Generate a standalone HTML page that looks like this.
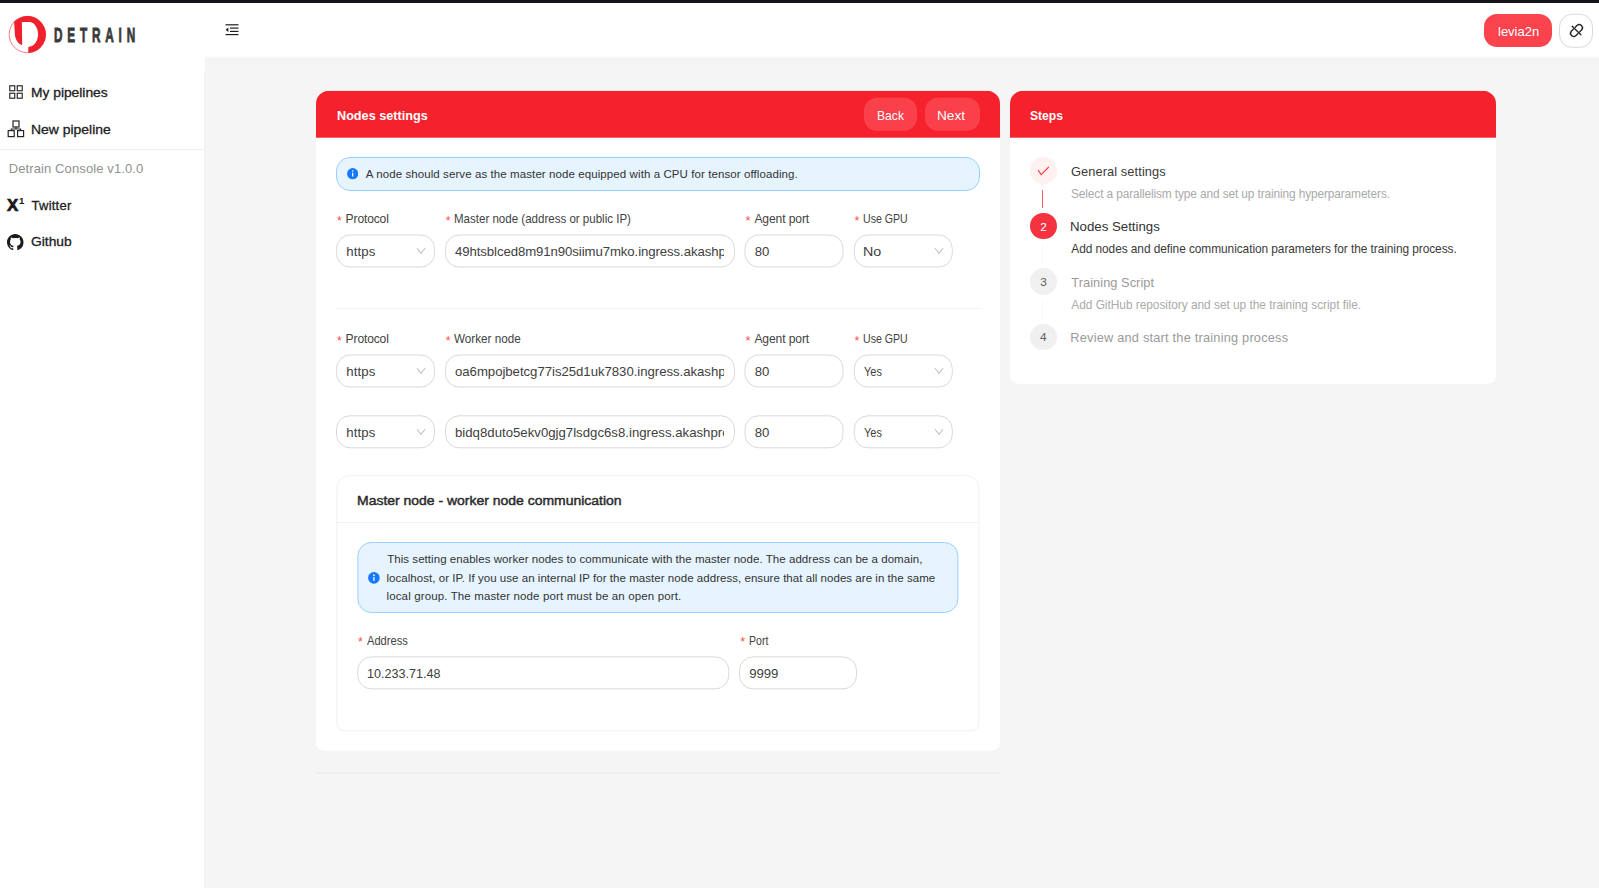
<!DOCTYPE html>
<html lang="en">
<head>
<meta charset="utf-8">
<title>Detrain Console</title>
<style>
*{box-sizing:border-box;margin:0;padding:0}
html,body{width:1599px;height:888px;overflow:hidden;background:#fff}
body{font-family:"Liberation Sans",sans-serif;color:#262626;font-size:14px;position:relative}
.abs{position:absolute}
.t{position:absolute;white-space:nowrap;line-height:1;transform-origin:0 50%}
.clip{position:absolute;overflow:hidden}
#topbar{left:0;top:0;width:1599px;height:2.8px;background:#14151a}
#content{left:205px;top:56px;width:1394px;height:832px;background:#f5f5f5}
#hshadow{left:205px;top:55px;width:1394px;height:6px;background:linear-gradient(#fff 8%,#f1f1f1 75%,#f5f5f5 100%)}
#sborder{left:204px;top:72px;width:1px;height:816px;background:#f1f1f1}
#side-div{left:0;top:149px;width:205px;height:1px;background:#f0f0f0}
.card{position:absolute;background:#fff;border-radius:13px 13px 8px 8px;overflow:hidden}
.card-h{position:absolute;left:0;top:0;right:0;height:46.5px;background:#f5222d}
.btn{position:absolute;height:33.4px;border-radius:13px;background:#fa404b}
.alert{position:absolute;background:#e6f4ff;border:1px solid #9ccfff;border-radius:14px}
.inp{position:absolute;height:33px;border:1px solid #d9d9d9;border-radius:14px;background:#fff}
.hr{position:absolute;height:1px;background:#f0f0f0}
.step-c{position:absolute;width:26.6px;height:26.6px;border-radius:50%}
</style>
</head>
<body>
<div class="abs" id="content"></div>
<div class="abs" id="hshadow"></div>
<div class="abs" id="sborder"></div>
<div class="abs" id="topbar"></div>

<!-- LOGO -->
<svg class="abs" style="left:8px;top:15px" width="40" height="40" viewBox="8 15 40 40">
  <circle cx="27.4" cy="34.5" r="18.2" fill="#fff" stroke="#f5222d" stroke-width="0.6"/>
  <path d="M14.1 21.6 A18.5 18.5 0 1 1 28.2 53 L28.4 46.7 A9 12.4 0 0 0 30 22 L21.9 22 L22.2 45.2 Q16.6 43.4 15 36 Z" fill="#f0212c"/>
</svg>
<div class="t" id="brand" style="left:53.5px;top:24.4px;font-size:21px;font-weight:700;color:#3a3a3a;letter-spacing:8.6px;transform:scaleX(0.56);-webkit-text-stroke:0.9px #3a3a3a">DETRAIN</div>


<!-- SIDEBAR -->
<svg class="abs" style="left:8.7px;top:84.8px" width="14" height="14" viewBox="0 0 14.6 14.6" fill="none" stroke="#262626" stroke-width="1.2">
  <rect x="0.8" y="0.8" width="5.2" height="5.2"/><rect x="8.6" y="0.8" width="5.2" height="5.2"/>
  <rect x="0.8" y="8.6" width="5.2" height="5.2"/><rect x="8.6" y="8.6" width="5.2" height="5.2"/>
</svg>
<svg class="abs" style="left:6.8px;top:120px" width="18" height="18" viewBox="0 0 18 18" fill="none" stroke="#262626" stroke-width="1.2">
  <rect x="6" y="1" width="6" height="6"/><rect x="1.2" y="10.6" width="6" height="6"/><rect x="10.6" y="10.6" width="6" height="6"/>
  <path d="M9 7v2M4.2 10.6V9h9.4v1.6"/>
</svg>
<div class="abs" id="side-div"></div>
<div class="t" style="left:7px;top:197.6px;font-size:16px;font-weight:700;color:#1a1a1a;-webkit-text-stroke:0.7px #1a1a1a;transform:scaleX(1.05)">X</div>
<div class="t" style="left:18.9px;top:195.6px;font-size:9.5px;font-weight:700;color:#1a1a1a">1</div>
<svg class="abs" style="left:7.2px;top:233.7px" width="16.5" height="16.5" viewBox="0 0 16 16" fill="#1a1a1a">
  <path d="M8 0C3.58 0 0 3.58 0 8c0 3.54 2.29 6.53 5.47 7.59.4.07.55-.17.55-.38 0-.19-.01-.82-.01-1.49-2.01.37-2.53-.49-2.69-.94-.09-.23-.48-.94-.82-1.13-.28-.15-.68-.52-.01-.53.63-.01 1.08.58 1.23.82.72 1.21 1.87.87 2.33.66.07-.52.28-.87.51-1.07-1.78-.2-3.64-.89-3.64-3.95 0-.87.31-1.59.82-2.15-.08-.2-.36-1.02.08-2.12 0 0 .67-.21 2.2.82.64-.18 1.32-.27 2-.27s1.36.09 2 .27c1.53-1.04 2.2-.82 2.2-.82.44 1.1.16 1.92.08 2.12.51.56.82 1.27.82 2.15 0 3.07-1.87 3.75-3.65 3.95.29.25.54.73.54 1.48 0 1.07-.01 1.93-.01 2.2 0 .21.15.46.55.38A8.01 8.01 0 0 0 16 8c0-4.42-3.58-8-8-8z"/>
</svg>


<!-- HEADER -->
<svg class="abs" style="left:225px;top:24px" width="14" height="12" viewBox="0 0 14 12" fill="#1f1f1f">
  <rect x="0.5" y="0.2" width="13" height="1.2"/><rect x="5" y="3.5" width="8.5" height="1.2"/><rect x="5" y="6.8" width="8.5" height="1.2"/><rect x="0.5" y="10" width="13" height="1.2"/>
  <path d="M3.4 3.4v4.6L0.6 5.7z"/>
</svg>
<div class="btn" style="left:1483.7px;top:14px;width:68.5px;height:33.3px;background:#fb434e"></div>
<div class="abs" style="left:1559px;top:14px;width:34px;height:33.6px;border:1px solid #d9d9d9;border-radius:13px;background:#fff;transform:translateY(-0.2px)"></div>
<svg class="abs" style="left:1568px;top:22.1px" width="17" height="17" viewBox="0 0 16 16" fill="none" stroke="#2a2a2a" stroke-width="1.35" stroke-linecap="round"><g transform="rotate(-45 8 8)"><path d="M6.6 5H4.4a3 3 0 0 0 0 6H6.6M9.4 5h2.2a3 3 0 0 1 0 6H9.4M8 2.2V13.8"/></g></svg>


<!-- CARDS -->
<div class="card" style="left:316px;top:90px;width:684px;height:660px;transform:translateY(0.7px)"><div class="card-h"></div></div>
<div class="card" style="left:1010px;top:90px;width:485.7px;height:293px;transform:translateY(0.7px)"><div class="card-h"></div></div>
<div class="btn" style="left:863.8px;top:97px;width:53.7px;transform:translateY(0.8px)"></div>
<div class="btn" style="left:924.5px;top:97px;width:55px;transform:translateY(0.8px)"></div>
<div class="alert" style="left:336px;top:157px;width:643.5px;height:33.5px"></div>
<svg class="abs" style="left:347.1px;top:168.2px" width="11.4" height="11.4" viewBox="0 0 12 12"><circle cx="6" cy="6" r="5.9" fill="#1677ff"/><rect x="5.35" y="5" width="1.3" height="4" fill="#fff"/><circle cx="6" cy="3.2" r="0.85" fill="#fff"/></svg>
<div class="hr" style="left:336px;top:308px;width:643.5px;background:#f3f3f3"></div>
<div class="abs" style="left:336px;top:475px;width:642.5px;height:255.5px;border:1px solid #f0f0f0;border-radius:13px 13px 8px 8px;background:#fff;transform:translate(0.4px,0.3px)"></div>
<div class="hr" style="left:337px;top:522px;width:641.5px;background:#f2f2f2"></div>
<div class="alert" style="left:357px;top:542px;width:600.8px;height:70.5px;transform:translateX(0.4px)"></div>
<svg class="abs" style="left:368.1px;top:572px" width="11.8" height="11.8" viewBox="0 0 12 12"><circle cx="6" cy="6" r="5.9" fill="#1677ff"/><rect x="5.35" y="5" width="1.3" height="4" fill="#fff"/><circle cx="6" cy="3.2" r="0.85" fill="#fff"/></svg>
<div class="hr" style="left:316px;top:772px;width:684px;background:#e9e9e9;transform:translateY(0.4px)"></div>
<div class="inp" style="left:336px;top:234px;width:98.5px;transform:translate(0.00px,0.50px)"></div>
<svg class="abs" style="left:416.1px;top:247.2px" width="10" height="8" viewBox="0 0 10 8" fill="none" stroke="#bfbfbf" stroke-width="1.05"><path d="M1 1.3L5 6.4L9 1.3"/></svg>
<div class="inp" style="left:445px;top:234px;width:289.5px;transform:translate(0.00px,0.50px)"></div>
<div class="inp" style="left:744px;top:234px;width:99px;transform:translate(0.50px,0.50px)"></div>
<div class="inp" style="left:853px;top:234px;width:98.5px;transform:translate(0.80px,0.50px)"></div>
<svg class="abs" style="left:933.9px;top:247.2px" width="10" height="8" viewBox="0 0 10 8" fill="none" stroke="#bfbfbf" stroke-width="1.05"><path d="M1 1.3L5 6.4L9 1.3"/></svg>
<div class="inp" style="left:336px;top:354px;width:98.5px;transform:translate(0.00px,0.50px)"></div>
<svg class="abs" style="left:416.1px;top:367.2px" width="10" height="8" viewBox="0 0 10 8" fill="none" stroke="#bfbfbf" stroke-width="1.05"><path d="M1 1.3L5 6.4L9 1.3"/></svg>
<div class="inp" style="left:445px;top:354px;width:289.5px;transform:translate(0.00px,0.50px)"></div>
<div class="inp" style="left:744px;top:354px;width:99px;transform:translate(0.50px,0.50px)"></div>
<div class="inp" style="left:853px;top:354px;width:98.5px;transform:translate(0.80px,0.50px)"></div>
<svg class="abs" style="left:933.9px;top:367.2px" width="10" height="8" viewBox="0 0 10 8" fill="none" stroke="#bfbfbf" stroke-width="1.05"><path d="M1 1.3L5 6.4L9 1.3"/></svg>
<div class="inp" style="left:336px;top:415px;width:98.5px;transform:translate(0.00px,0.30px)"></div>
<svg class="abs" style="left:416.1px;top:428.0px" width="10" height="8" viewBox="0 0 10 8" fill="none" stroke="#bfbfbf" stroke-width="1.05"><path d="M1 1.3L5 6.4L9 1.3"/></svg>
<div class="inp" style="left:445px;top:415px;width:289.5px;transform:translate(0.00px,0.30px)"></div>
<div class="inp" style="left:744px;top:415px;width:99px;transform:translate(0.50px,0.30px)"></div>
<div class="inp" style="left:853px;top:415px;width:98.5px;transform:translate(0.80px,0.30px)"></div>
<svg class="abs" style="left:933.9px;top:428.0px" width="10" height="8" viewBox="0 0 10 8" fill="none" stroke="#bfbfbf" stroke-width="1.05"><path d="M1 1.3L5 6.4L9 1.3"/></svg>
<div class="inp" style="left:357px;top:656px;width:372.2px;transform:translate(0.30px,0.40px)"></div>
<div class="inp" style="left:739px;top:656px;width:117.5px;transform:translate(0.00px,0.40px)"></div>

<!-- STEPS -->
<div class="abs" style="left:1042.4px;top:189.5px;width:1px;height:18px;background:#f4566a"></div>
<div class="abs" style="left:1042.4px;top:245px;width:1px;height:18px;background:#f6f6f6"></div>
<div class="abs" style="left:1042.4px;top:300.5px;width:1px;height:18px;background:#f6f6f6"></div>
<div class="step-c" style="left:1030.1px;top:157.4px;background:#fff1f0"></div>
<svg class="abs" style="left:1036.8px;top:165.5px" width="13" height="11" viewBox="0 0 13 11" fill="none" stroke="#f5414b" stroke-width="1.2"><path d="M1 4.2L4.2 8.6L11.8 1"/></svg>
<div class="step-c" style="left:1030.1px;top:212.8px;background:#f5323f"></div>
<div class="step-c" style="left:1030.1px;top:268.2px;background:#f0f0f0"></div>
<div class="step-c" style="left:1030.1px;top:323.6px;background:#f0f0f0"></div>
<div class="t" style="left:1040.2px;top:221.6px;font-size:11.8px;color:#fff">2</div>
<div class="t" style="left:1040.2px;top:276.8px;font-size:11.8px;color:#606060">3</div>
<div class="t" style="left:1040.1px;top:332.2px;font-size:11.8px;color:#606060">4</div>

<!-- TEXTS -->
<div class="t" style="left:30.84px;top:85.60px;font-size:13px;color:#222;transform:scaleX(1.0605);-webkit-text-stroke:0.3px #222;">My pipelines</div>
<div class="t" style="left:30.83px;top:122.50px;font-size:13px;color:#222;transform:scaleX(1.0710);-webkit-text-stroke:0.3px #222;">New pipeline</div>
<div class="t" style="left:8.70px;top:161.80px;font-size:13px;color:#919191;letter-spacing:0.114px;">Detrain Console v1.0.0</div>
<div class="t" style="left:31.60px;top:199.00px;font-size:13px;color:#222;letter-spacing:0.224px;-webkit-text-stroke:0.3px #222;">Twitter</div>
<div class="t" style="left:31.20px;top:235.30px;font-size:13px;color:#222;transform:scaleX(1.0612);-webkit-text-stroke:0.3px #222;">Github</div>
<div class="t" style="left:1497.70px;top:25.00px;font-size:13.4px;color:#fff;transform:scaleX(0.9693);">levia2n</div>
<div class="t" style="left:336.60px;top:108.60px;font-size:13.6px;color:#fff;font-weight:700;transform:scaleX(0.9311);">Nodes settings</div>
<div class="t" style="left:877.07px;top:108.60px;font-size:13px;color:#fff;transform:scaleX(0.9331);">Back</div>
<div class="t" style="left:937.25px;top:108.60px;font-size:13px;color:#fff;transform:scaleX(1.0491);">Next</div>
<div class="t" style="left:365.80px;top:169.00px;font-size:11.5px;color:#333;letter-spacing:0.088px;">A node should serve as the master node equipped with a CPU for tensor offloading.</div>
<div class="t" style="left:337.00px;top:214.60px;font-size:12.5px;color:#ff4d4f;">*</div>
<div class="t" style="left:345.60px;top:213.00px;font-size:12.1px;color:#424242;letter-spacing:-0.154px;">Protocol</div>
<div class="t" style="left:445.80px;top:214.60px;font-size:12.5px;color:#ff4d4f;">*</div>
<div class="t" style="left:454.30px;top:213.00px;font-size:12.1px;color:#424242;transform:scaleX(0.9537);">Master node (address or public IP)</div>
<div class="t" style="left:745.60px;top:214.60px;font-size:12.5px;color:#ff4d4f;">*</div>
<div class="t" style="left:754.40px;top:213.00px;font-size:12.1px;color:#424242;letter-spacing:-0.116px;">Agent port</div>
<div class="t" style="left:854.40px;top:214.60px;font-size:12.5px;color:#ff4d4f;">*</div>
<div class="t" style="left:863.20px;top:213.00px;font-size:12.1px;color:#424242;transform:scaleX(0.8760);">Use GPU</div>
<div class="t" style="left:337.00px;top:334.60px;font-size:12.5px;color:#ff4d4f;">*</div>
<div class="t" style="left:345.60px;top:333.00px;font-size:12.1px;color:#424242;letter-spacing:-0.154px;">Protocol</div>
<div class="t" style="left:445.80px;top:334.60px;font-size:12.5px;color:#ff4d4f;">*</div>
<div class="t" style="left:454.30px;top:333.00px;font-size:12.1px;color:#424242;transform:scaleX(0.9655);">Worker node</div>
<div class="t" style="left:745.60px;top:334.60px;font-size:12.5px;color:#ff4d4f;">*</div>
<div class="t" style="left:754.40px;top:333.00px;font-size:12.1px;color:#424242;letter-spacing:-0.116px;">Agent port</div>
<div class="t" style="left:854.40px;top:334.60px;font-size:12.5px;color:#ff4d4f;">*</div>
<div class="t" style="left:863.20px;top:333.00px;font-size:12.1px;color:#424242;transform:scaleX(0.8760);">Use GPU</div>
<div class="t" style="left:358.00px;top:636.30px;font-size:12.5px;color:#ff4d4f;">*</div>
<div class="t" style="left:366.80px;top:634.70px;font-size:12.1px;color:#424242;transform:scaleX(0.9184);">Address</div>
<div class="t" style="left:740.20px;top:636.30px;font-size:12.5px;color:#ff4d4f;">*</div>
<div class="t" style="left:749.30px;top:634.70px;font-size:12.1px;color:#424242;transform:scaleX(0.8721);">Port</div>
<div class="t" style="left:356.74px;top:494.00px;font-size:13.2px;color:#2b2b2b;transform:scaleX(1.0587);-webkit-text-stroke:0.45px #2b2b2b;">Master node - worker node communication</div>
<div class="t" style="left:387.20px;top:554.40px;font-size:11.5px;color:#333;letter-spacing:0.050px;">This setting enables worker nodes to communicate with the master node. The address can be a domain,</div>
<div class="t" style="left:386.50px;top:572.70px;font-size:11.5px;color:#333;letter-spacing:0.041px;">localhost, or IP. If you use an internal IP for the master node address, ensure that all nodes are in the same</div>
<div class="t" style="left:386.50px;top:591.00px;font-size:11.5px;color:#333;letter-spacing:0.134px;">local group. The master node port must be an open port.</div>
<div class="t" style="left:1030.30px;top:108.60px;font-size:13.6px;color:#fff;font-weight:700;transform:scaleX(0.8914);">Steps</div>
<div class="t" style="left:1070.90px;top:165.60px;font-size:12.8px;color:#3a3a3a;letter-spacing:0.108px;">General settings</div>
<div class="t" style="left:1071.00px;top:188.70px;font-size:11.9px;color:#aaa;letter-spacing:-0.123px;">Select a parallelism type and set up training hyperparameters.</div>
<div class="t" style="left:1070.26px;top:220.90px;font-size:12.8px;color:#333;transform:scaleX(1.0353);">Nodes Settings</div>
<div class="t" style="left:1071.30px;top:243.90px;font-size:11.9px;color:#3a3a3a;letter-spacing:-0.065px;">Add nodes and define communication parameters for the training process.</div>
<div class="t" style="left:1071.30px;top:276.50px;font-size:12.8px;color:#9a9a9a;letter-spacing:0.052px;">Training Script</div>
<div class="t" style="left:1071.30px;top:299.50px;font-size:11.9px;color:#aaa;letter-spacing:-0.029px;">Add GitHub repository and set up the training script file.</div>
<div class="t" style="left:1070.30px;top:331.80px;font-size:12.8px;color:#9a9a9a;letter-spacing:0.202px;">Review and start the training process</div>
<div class="t" style="left:346.30px;top:245.25px;font-size:13.2px;color:#404040;letter-spacing:0.101px;">https</div>
<div class="clip" style="left:455.00px;top:241.25px;width:268.80px;height:21.2px"><div class="t" style="left:0;top:4px;font-size:13.2px;color:#404040;letter-spacing:-0.086px">49htsblced8m91n90siimu7mko.ingress.akashprovid.com</div></div>
<div class="t" style="left:754.80px;top:245.25px;font-size:13.2px;color:#404040;letter-spacing:-0.134px;">80</div>
<div class="t" style="left:863.12px;top:245.25px;font-size:13.2px;color:#404040;transform:scaleX(1.0822);">No</div>
<div class="t" style="left:346.30px;top:365.25px;font-size:13.2px;color:#404040;letter-spacing:0.101px;">https</div>
<div class="clip" style="left:455.00px;top:361.25px;width:268.80px;height:21.2px"><div class="t" style="left:0;top:4px;font-size:13.2px;color:#404040;letter-spacing:-0.037px">oa6mpojbetcg77is25d1uk7830.ingress.akashprovid.com</div></div>
<div class="t" style="left:754.80px;top:365.25px;font-size:13.2px;color:#404040;letter-spacing:-0.134px;">80</div>
<div class="t" style="left:863.80px;top:365.25px;font-size:13.2px;color:#404040;transform:scaleX(0.8303);">Yes</div>
<div class="t" style="left:346.30px;top:426.05px;font-size:13.2px;color:#404040;letter-spacing:0.101px;">https</div>
<div class="clip" style="left:455.00px;top:422.05px;width:268.80px;height:21.2px"><div class="t" style="left:0;top:4px;font-size:13.2px;color:#404040;letter-spacing:0.007px">bidq8duto5ekv0gjg7lsdgc6s8.ingress.akashprovid.com</div></div>
<div class="t" style="left:754.80px;top:426.05px;font-size:13.2px;color:#404040;letter-spacing:-0.134px;">80</div>
<div class="t" style="left:863.80px;top:426.05px;font-size:13.2px;color:#404040;transform:scaleX(0.8303);">Yes</div>
<div class="t" style="left:367.14px;top:667.15px;font-size:13.2px;color:#404040;transform:scaleX(0.9555);">10.233.71.48</div>
<div class="t" style="left:749.30px;top:667.15px;font-size:13.2px;color:#404040;letter-spacing:-0.101px;">9999</div>
</body>
</html>
